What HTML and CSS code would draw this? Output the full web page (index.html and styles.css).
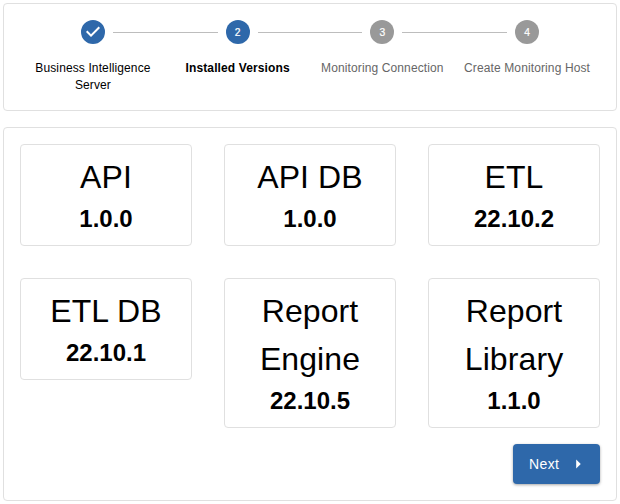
FILE: index.html
```html
<!DOCTYPE html>
<html lang="en">
<head>
<meta charset="utf-8">
<title>Installed Versions</title>
<link rel="stylesheet" href="styles.css">
</head>
<body>
<section class="paper stepper">
  <div class="step">
    <svg class="icon done" viewBox="0 0 24 24"><path d="M12 0a12 12 0 1 0 0 24 12 12 0 1 0 0-24zm-2 17l-5-5 1.4-1.4 3.6 3.6 7.6-7.6L19 8l-9 9z"/></svg>
    <div class="label">Business Intelligence Server</div>
  </div>
  <div class="step linked">
    <div class="icon number active">2</div>
    <div class="label current">Installed Versions</div>
  </div>
  <div class="step linked">
    <div class="icon number">3</div>
    <div class="label pending">Monitoring Connection</div>
  </div>
  <div class="step linked">
    <div class="icon number">4</div>
    <div class="label pending">Create Monitoring Host</div>
  </div>
</section>
<main class="paper content">
  <div class="grid">
    <div class="card"><h2>API</h2><p>1.0.0</p></div>
    <div class="card"><h2>API DB</h2><p>1.0.0</p></div>
    <div class="card"><h2>ETL</h2><p>22.10.2</p></div>
    <div class="card"><h2>ETL DB</h2><p>22.10.1</p></div>
    <div class="card"><h2>Report Engine</h2><p>22.10.5</p></div>
    <div class="card"><h2>Report Library</h2><p>1.1.0</p></div>
  </div>
  <div class="actions">
    <button class="next">Next<svg class="arrow" viewBox="0 0 24 24"><path d="M10 17l5-5-5-5v10z"/></svg></button>
  </div>
</main>
</body>
</html>
```
FILE: styles.css
```css
* { box-sizing: border-box; }
body {
  margin: 0;
  padding: 3px;
  background: #fff;
  color: #000;
  font-family: "Liberation Sans", Arial, sans-serif;
}
.paper {
  border: 1px solid #e0e0e0;
  border-radius: 4px;
}
.stepper {
  display: flex;
  height: 108px;
  padding: 16px 16.6px;
}
.step {
  position: relative;
  flex: 1;
  display: flex;
  flex-direction: column;
  align-items: center;
  padding: 0 8px;
}
.linked::before {
  content: "";
  position: absolute;
  top: 12px;
  left: calc(-50% + 20px);
  right: calc(50% + 20px);
  border-top: 1px solid #bdbdbd;
}
.icon {
  width: 24px;
  height: 24px;
  flex: none;
}
.done { fill: #2e68aa; }
.number {
  border-radius: 50%;
  background: #999;
  color: #fff;
  font-size: 10.3px;
  line-height: 25px;
  text-align: center;
  -webkit-text-stroke: 0.2px #fff;
}
.active { background: #2e68aa; }
.label {
  margin-top: 16px;
  font-size: 12px;
  line-height: 17px;
  letter-spacing: 0.12px;
  text-align: center;
}
.current { font-weight: 700; }
.pending { color: #666; }
.content {
  height: 374px;
  margin-top: 16px;
  padding: 16px;
}
.grid {
  display: grid;
  grid-template-columns: repeat(3, 172px);
  gap: 32px;
  align-items: start;
}
.card {
  border: 1px solid #e0e0e0;
  border-radius: 4px;
  padding: 8px;
  text-align: center;
}
.card h2 {
  margin: 0;
  font-size: 32px;
  font-weight: 400;
  line-height: 48px;
  letter-spacing: 0.1px;
}
.card p {
  margin: 0;
  font-size: 24px;
  font-weight: 700;
  line-height: 36px;
}
.actions {
  display: flex;
  justify-content: flex-end;
  margin-top: 16px;
}
.next {
  display: flex;
  align-items: center;
  justify-content: space-between;
  width: 87px;
  height: 40px;
  padding: 0 11px 0 16px;
  border: 0;
  border-radius: 4px;
  background: #2e68aa;
  box-shadow: 0 1px 3px rgba(0, 0, 0, 0.35);
  color: #fff;
  font: 14px "Liberation Sans", Arial, sans-serif;
  letter-spacing: 0.4px;
}
.arrow {
  width: 22px;
  height: 22px;
  fill: currentColor;
}
```
